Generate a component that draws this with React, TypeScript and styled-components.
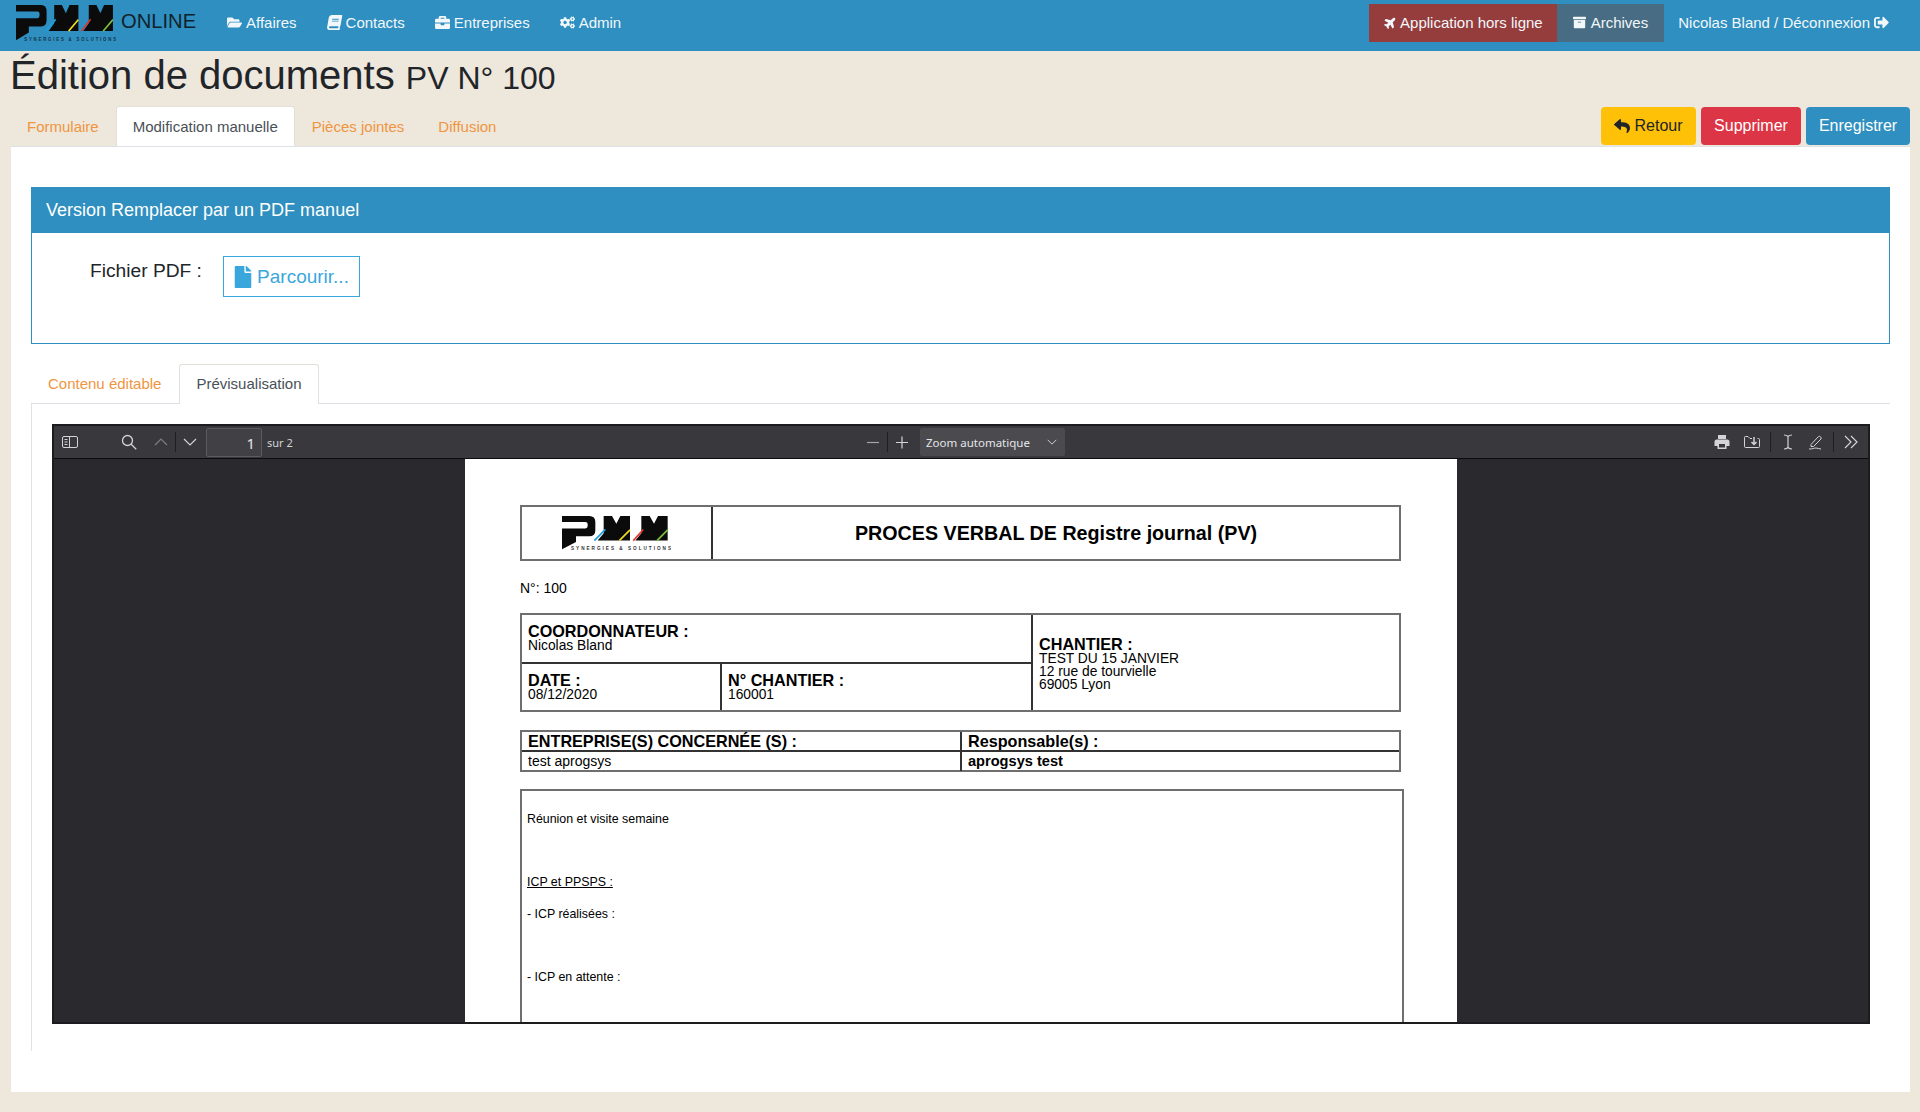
import React from 'react';
import styled, { createGlobalStyle } from 'styled-components';
import {
  FaArchive, FaBook, FaBriefcase, FaCogs, FaFile, FaFolderOpen, FaPlane, FaReply, FaSignOutAlt,
} from 'react-icons/fa';

const BLUE = '#2e8fc0';
const ORANGE = '#f0953f';

const GlobalStyle = createGlobalStyle`
  html, body {
    margin: 0;
    padding: 0;
    background: #eee7dc;
    color: #212529;
    font-family: "Liberation Sans", Arial, sans-serif;
    font-size: 16px;
  }
  * { box-sizing: border-box; }
`;

const Page = styled.div`
  min-height: 1112px;
  padding-bottom: 20px;
`;

const Navbar = styled.nav`
  height: 51px;
  background: ${BLUE};
  display: flex;
  align-items: center;
  padding: 0 0 6px 16px;
  color: #fff;
`;

const Brand = styled.div`
  display: flex;
  align-items: center;
  color: #10222c;
  font-size: 20.200px;
  width: 211px;
  gap: 5px;
`;

const BrandName = styled.span`
  padding-bottom: 2px;
`;

const NavLink = styled.span`
  display: inline-flex;
  align-items: center;
  gap: 4px;
  font-size: 15px;
  margin-right: 30px;
  white-space: nowrap;
  color: #f2f7fa;
  svg { font-size: 15px; }
`;

const NavRight = styled.div`
  margin-left: auto;
  display: flex;
  align-items: center;
  height: 38px;
`;

const NavBlock = styled.span<{ $bg: string; $gap: number; $pad: string }>`
  display: inline-flex;
  align-items: center;
  gap: ${({ $gap }) => $gap}px;
  height: 38px;
  padding: ${({ $pad }) => $pad};
  font-size: 15px;
  background: ${({ $bg }) => $bg};
  color: #f2f7fa;
  svg { font-size: 13px; }
`;

const PlaneIcon = styled(FaPlane)`
  transform: rotate(-45deg);
`;

const BookIcon = styled(FaBook)`
  transform: skewX(-10deg);
`;

const NavUser = styled.span`
  display: inline-flex;
  align-items: center;
  gap: 4px;
  font-size: 15px;
  color: #f2f7fa;
  margin: 0 31px 0 14px;
`;

const Title = styled.h1`
  margin: 0;
  padding: 0 0 0 10px;
  height: 55px;
  font-size: 40px;
  line-height: 48px;
  font-weight: 400;
  small { font-size: 32px; }
`;

const TabBar = styled.div`
  display: flex;
  align-items: flex-start;
  padding: 0 10px;
  height: 40px;
`;

const Tab = styled.span<{ $active?: boolean }>`
  height: 40px;
  padding: 0 16px 1px;
  display: flex;
  align-items: center;
  font-size: 15px;
  color: ${({ $active }) => ($active ? '#495057' : ORANGE)};
  background: ${({ $active }) => ($active ? '#fff' : 'transparent')};
  border-radius: 3px 3px 0 0;
  border: 1px solid ${({ $active }) => ($active ? '#e3e0da' : 'transparent')};
  border-bottom: none;
`;

const SubTab = styled(Tab)`
  padding-bottom: 3px;
`;

const Actions = styled.div`
  margin: 1px 0 0 auto;
  display: flex;
  gap: 5px;
`;

const ActionButton = styled.span<{ $bg: string; $fg: string; $w: number }>`
  height: 38px;
  width: ${({ $w }) => $w}px;
  display: inline-flex;
  align-items: center;
  justify-content: center;
  gap: 4px;
  border-radius: 4px;
  font-size: 16px;
  background: ${({ $bg }) => $bg};
  color: ${({ $fg }) => $fg};
`;

const Panel = styled.main`
  margin: 0 10px 0 11px;
  background: #fff;
  border-top: 1px solid #dee2e6;
  padding: 40px 20px 40px;
  height: 946px;
`;

const Card = styled.section`
  border: 1px solid ${BLUE};
  height: 157px;
`;

const CardHeader = styled.header`
  height: 45px;
  background: ${BLUE};
  color: #fff;
  font-size: 18px;
  padding: 0 14px;
  display: flex;
  align-items: center;
`;

const CardBody = styled.div`
  display: flex;
  align-items: flex-start;
  padding: 24px 0 0 58px;
`;

const FieldLabel = styled.label`
  font-size: 19.200px;
  line-height: 28px;
  width: 133px;
`;

const BrowseButton = styled.span`
  height: 41px;
  width: 137px;
  margin-top: -1px;
  padding-right: 2px;
  border: 1px solid #3aa7dc;
  color: #3aa7dc;
  font-size: 19px;
  display: inline-flex;
  align-items: center;
  justify-content: center;
  gap: 3px;
  svg { font-size: 22px; }
`;

const SubTabBar = styled.div`
  margin-top: 20px;
  display: flex;
  gap: 1px;
  height: 40px;
  border-bottom: 1px solid #dee2e6;
`;

const SubTabPane = styled.div`
  border-left: 1px solid #dee2e6;
  padding: 20px 20px 0 20px;
  height: 647px;
`;

const Viewer = styled.div`
  height: 600px;
  border: 2px solid #1c1c1f;
  background: #2a2a2e;
  display: flex;
  flex-direction: column;
  overflow: hidden;
`;

const ViewerToolbar = styled.div`
  height: 33px;
  flex: none;
  background: #38383d;
  border-bottom: 1px solid #0c0c0d;
  display: flex;
  align-items: center;
  position: relative;
  padding: 0 3px 0 2px;
  color: #d4d4d7;
`;

const ToolGroup = styled.div`
  display: flex;
  align-items: center;
`;

const ToolIcon = styled.span<{ $w?: number; $ml?: number }>`
  width: ${({ $w }) => $w ?? 28}px;
  margin-left: ${({ $ml }) => $ml ?? 0}px;
  height: 24px;
  display: inline-flex;
  align-items: center;
  justify-content: center;
  svg { display: block; }
`;

const ToolSep = styled.span<{ $mx?: number }>`
  width: 1px;
  height: 20px;
  margin: 0 ${({ $mx }) => $mx ?? 0}px;
  background: #1f1f22;
`;

const PageInput = styled.span`
  width: 56px;
  height: 29px;
  margin-left: 2px;
  background: #404045;
  border: 1px solid #5b5b60;
  border-radius: 2px;
  text-align: right;
  padding-right: 6px;
  line-height: 29px;
  font-size: 15px;
  font-family: "Noto Sans", sans-serif;
  color: #e6e6e8;
`;

const PageCount = styled.span`
  margin-left: 5px;
  font-size: 11px;
  font-family: "Noto Sans", sans-serif;
`;

const CenterTools = styled.div`
  position: absolute;
  left: 805px;
  top: 2px;
  height: 28px;
  display: flex;
  align-items: center;
`;

const ZoomSelect = styled.span`
  margin-left: 4px;
  width: 145px;
  height: 28px;
  background: #4a4a4f;
  border-radius: 2px;
  display: flex;
  align-items: center;
  justify-content: space-between;
  padding: 0 8px 0 6px;
  font-size: 11.500px;
  font-family: "Noto Sans", sans-serif;
  color: #e6e6e8;
`;

const RightTools = styled(ToolGroup)`
  margin-left: auto;
`;

const ViewerStage = styled.div`
  flex: 1;
  display: flex;
  justify-content: center;
  overflow: hidden;
`;

const PdfPage = styled.article`
  width: 992px;
  background: #fff;
  color: #000;
  padding: 46px 54px 0 55px;
  flex: none;
`;

const HeadBox = styled.div`
  width: 881px;
  height: 56px;
  border: 2px solid #6f6f6f;
  display: flex;
`;

const HeadLogo = styled.div`
  width: 191px;
  border-right: 2px solid #333;
  display: flex;
  align-items: center;
  justify-content: center;
`;

const HeadTitle = styled.div`
  flex: 1;
  display: flex;
  align-items: center;
  justify-content: center;
  font-weight: 700;
  font-size: 19.700px;
`;

const DocNumber = styled.div`
  font-size: 14px;
  line-height: 16px;
  margin: 19px 0 17px;
`;

const InfoTable = styled.div`
  width: 881px;
  height: 99px;
  border: 2px solid #6f6f6f;
  display: grid;
  grid-template-columns: 200px 311px 1fr;
  grid-template-rows: 49px 1fr;
`;

const InfoCell = styled.div<{ $span?: string; $rows?: string; $right?: boolean; $bottom?: boolean; $pad?: string }>`
  grid-column: ${({ $span }) => $span ?? 'auto'};
  grid-row: ${({ $rows }) => $rows ?? 'auto'};
  border-right: ${({ $right }) => ($right ? '2px solid #333' : 'none')};
  border-bottom: ${({ $bottom }) => ($bottom ? '2px solid #333' : 'none')};
  padding: ${({ $pad }) => $pad ?? '8px 6px 0'};
  display: flex;
  flex-direction: column;
`;

const CellLabel = styled.strong`
  font-size: 16.200px;
  line-height: 16px;
`;

const CellText = styled.span`
  font-size: 13.800px;
  line-height: 13px;
`;

const PeopleTable = styled.div`
  width: 881px;
  height: 42px;
  margin-top: 18px;
  border: 2px solid #6f6f6f;
  display: grid;
  grid-template-columns: 440px 1fr;
  grid-template-rows: 20px 1fr;
`;

const PeopleCell = styled.div<{ $right?: boolean; $bottom?: boolean; $bold?: boolean; $head?: boolean }>`
  border-right: ${({ $right }) => ($right ? '2px solid #333' : 'none')};
  border-bottom: ${({ $bottom }) => ($bottom ? '2px solid #333' : 'none')};
  padding: 0 6px;
  font-weight: ${({ $bold }) => ($bold ? 700 : 400)};
  font-size: ${({ $head, $bold }) => ($head ? 16.2 : $bold ? 14.6 : 14)}px;
  line-height: ${({ $head }) => ($head ? 18 : 19)}px;
  white-space: nowrap;
`;

const MinutesBox = styled.div`
  width: 884px;
  height: 400px;
  margin-top: 17px;
  border: 2px solid #6f6f6f;
  padding: 13px 5px 0;
  font-size: 12.400px;
  line-height: 31.6px;
`;

const MinutesLine = styled.div<{ $underline?: boolean }>`
  min-height: 31.6px;
  text-decoration: ${({ $underline }) => ($underline ? 'underline' : 'none')};
`;

const PMM_P = 'M18 15H100Q118 15 118 33V57Q118 75 100 75H60V92L18 114V52H88Q95 52 95 45V39Q95 33 88 33H18Z';
const PMM_M = 'M143 15H168L181 38L193 15H222V88H125L143 66Z';

const PmmLogo = ({ width, height, text }: { width: number; height: number; text: string }) => (
  <svg width={width} height={height} viewBox="18 15 327 101" preserveAspectRatio="none" style={{ display: 'block' }}>
    <path fill="#0b0b0c" d={PMM_P} />
    <path fill="#0b0b0c" d={PMM_M} />
    <path fill="#0b0b0c" d={PMM_M} transform="translate(113 0)" />
    <path stroke="#1d9fe0" strokeWidth="5" d="M115 88L148 55" />
    <path stroke="#f4dd1f" strokeWidth="5" d="M190 88L222 56" />
    <path stroke="#e2352b" strokeWidth="5" d="M232 88L262 55" />
    <path stroke="#7cc242" strokeWidth="5" d="M303 88L335 56" />
    <text x="45" y="115" fontSize="14" fontWeight="700" textLength="300" lengthAdjust="spacing" fill={text} fontFamily="Liberation Sans, sans-serif">
      SYNERGIES &amp; SOLUTIONS
    </text>
  </svg>
);

const Sidebar = () => (
  <svg width="16" height="14" viewBox="0 0 16 14" fill="none" stroke="currentColor">
    <rect x=".5" y="1.5" width="15" height="11" rx="1.5" />
    <path d="M7.5 1.5v11M2.5 4.5h3M2.5 7h3M2.5 9.5h3" />
  </svg>
);

const Search = () => (
  <svg width="16" height="16" viewBox="0 0 16 16" fill="none" stroke="currentColor" strokeWidth="1.3">
    <circle cx="6.5" cy="6.5" r="5" />
    <path d="M10.2 10.2l5 5" />
  </svg>
);

const Chevron = ({ up, dim, size = 14 }: { up?: boolean; dim?: boolean; size?: number }) => (
  <svg width={size} height={size} viewBox="0 0 14 14" fill="none" stroke="currentColor" strokeWidth="1.2" opacity={dim ? 0.45 : 1}>
    <path d={up ? 'M1 10l6-6 6 6' : 'M1 4l6 6 6-6'} />
  </svg>
);

const Minus = () => (
  <svg width="14" height="14" viewBox="0 0 14 14" stroke="currentColor" strokeWidth="1.2" opacity={0.7}>
    <path d="M1 7.5h12" />
  </svg>
);

const Plus = () => (
  <svg width="14" height="14" viewBox="0 0 14 14" stroke="currentColor" strokeWidth="1.2">
    <path d="M1 7.5h12M7 1.5v12" />
  </svg>
);

const Printer = () => (
  <svg width="16" height="16" viewBox="0 0 16 16" fill="currentColor">
    <path d="M4 1h8v4H4zM2.5 5.5h11c1 0 2 1 2 2V12h-3v3h-9v-3H.5V7.5c0-1 1-2 2-2zM5 10v3.5h6V10z" fillRule="evenodd" />
  </svg>
);

const SaveFile = () => (
  <svg width="16" height="14" viewBox="0 0 16 14" fill="none" stroke="currentColor">
    <path d="M4 1.5H1.5a1 1 0 0 0-1 1v9a1 1 0 0 0 1 1h13a1 1 0 0 0 1-1v-7a1 1 0 0 0-1-1h-1M4 1.5l2 2h2" />
    <path d="M10 2v7M7.5 7l2.5 2.5L12.500 7" strokeWidth="1.5" />
  </svg>
);

const TextCursor = () => (
  <svg width="12" height="16" viewBox="0 0 12 16" fill="none" stroke="currentColor" strokeWidth="1.2">
    <path d="M2 1c2 0 3 .5 4 1.500C7 1.500 8 1 10 1M6 2.500v11M2 15c2 0 3-.5 4-1.500 1 1 2 1.500 4 1.500" />
  </svg>
);

const Pencil = () => (
  <svg width="16" height="16" viewBox="0 0 16 16" fill="none" stroke="currentColor">
    <path d="M3 10.500L10.500 2.500c1-1 3.500 1 2.500 2.500L5.500 12.500H3zM1 15c4 0 5-1 7-1s3 1 5 1" />
  </svg>
);

const DoubleChevron = () => (
  <svg width="14" height="14" viewBox="0 0 14 14" fill="none" stroke="currentColor" strokeWidth="1.2">
    <path d="M1 1l6 6-6 6M7 1l6 6-6 6" />
  </svg>
);

const App = () => (
  <Page>
    <GlobalStyle />
    <Navbar>
      <Brand>
        <PmmLogo width={100} height={36} text="#16324a" />
        <BrandName>ONLINE</BrandName>
      </Brand>
      <NavLink><FaFolderOpen /> Affaires</NavLink>
      <NavLink><BookIcon /> Contacts</NavLink>
      <NavLink><FaBriefcase /> Entreprises</NavLink>
      <NavLink><FaCogs /> Admin</NavLink>
      <NavRight>
        <NavBlock $bg="#953c3d" $gap={3} $pad="0 14px 0 15px"><PlaneIcon /> Application hors ligne</NavBlock>
        <NavBlock $bg="#476c83" $gap={5} $pad="0 16px"><FaArchive /> Archives</NavBlock>
        <NavUser>Nicolas Bland / Déconnexion <FaSignOutAlt /></NavUser>
      </NavRight>
    </Navbar>
    <Title>Édition de documents <small>PV N° 100</small></Title>
    <TabBar>
      <Tab>Formulaire</Tab>
      <Tab $active>Modification manuelle</Tab>
      <Tab>Pièces jointes</Tab>
      <Tab>Diffusion</Tab>
      <Actions>
        <ActionButton $bg="#ffc107" $fg="#212529" $w={95}><FaReply /> Retour</ActionButton>
        <ActionButton $bg="#dc3545" $fg="#fff" $w={100}>Supprimer</ActionButton>
        <ActionButton $bg={BLUE} $fg="#fff" $w={104}>Enregistrer</ActionButton>
      </Actions>
    </TabBar>
    <Panel>
      <Card>
        <CardHeader>Version Remplacer par un PDF manuel</CardHeader>
        <CardBody>
          <FieldLabel>Fichier PDF :</FieldLabel>
          <BrowseButton><FaFile /> Parcourir...</BrowseButton>
        </CardBody>
      </Card>
      <SubTabBar>
        <SubTab>Contenu éditable</SubTab>
        <SubTab $active>Prévisualisation</SubTab>
      </SubTabBar>
      <SubTabPane>
        <Viewer>
          <ViewerToolbar>
            <ToolGroup>
              <ToolIcon><Sidebar /></ToolIcon>
              <ToolIcon $ml={31}><Search /></ToolIcon>
              <ToolIcon $ml={4}><Chevron up dim /></ToolIcon>
              <ToolSep />
              <ToolIcon><Chevron /></ToolIcon>
              <PageInput>1</PageInput>
              <PageCount>sur 2</PageCount>
            </ToolGroup>
            <CenterTools>
              <ToolIcon><Minus /></ToolIcon>
              <ToolSep />
              <ToolIcon><Plus /></ToolIcon>
              <ZoomSelect>Zoom automatique <Chevron size={10} /></ZoomSelect>
            </CenterTools>
            <RightTools>
              <ToolIcon $w={30}><Printer /></ToolIcon>
              <ToolIcon $w={30}><SaveFile /></ToolIcon>
              <ToolSep $mx={3} />
              <ToolIcon><TextCursor /></ToolIcon>
              <ToolIcon><Pencil /></ToolIcon>
              <ToolSep $mx={3} />
              <ToolIcon><DoubleChevron /></ToolIcon>
            </RightTools>
          </ViewerToolbar>
          <ViewerStage>
            <PdfPage>
              <HeadBox>
                <HeadLogo><PmmLogo width={109} height={34} text="#333" /></HeadLogo>
                <HeadTitle>PROCES VERBAL DE Registre journal (PV)</HeadTitle>
              </HeadBox>
              <DocNumber>N°: 100</DocNumber>
              <InfoTable>
                <InfoCell $span="1 / 3" $right $bottom>
                  <CellLabel>COORDONNATEUR :</CellLabel>
                  <CellText>Nicolas Bland</CellText>
                </InfoCell>
                <InfoCell $span="3" $rows="1 / 3" $pad="21px 6px 0">
                  <CellLabel>CHANTIER :</CellLabel>
                  <CellText>TEST DU 15 JANVIER</CellText>
                  <CellText>12 rue de tourvielle</CellText>
                  <CellText>69005 Lyon</CellText>
                </InfoCell>
                <InfoCell $right>
                  <CellLabel>DATE :</CellLabel>
                  <CellText>08/12/2020</CellText>
                </InfoCell>
                <InfoCell $right>
                  <CellLabel>N° CHANTIER :</CellLabel>
                  <CellText>160001</CellText>
                </InfoCell>
              </InfoTable>
              <PeopleTable>
                <PeopleCell $right $bottom $bold $head>ENTREPRISE(S) CONCERNÉE (S) :</PeopleCell>
                <PeopleCell $bottom $bold $head>Responsable(s) :</PeopleCell>
                <PeopleCell $right>test aprogsys</PeopleCell>
                <PeopleCell $bold>aprogsys test</PeopleCell>
              </PeopleTable>
              <MinutesBox>
                <MinutesLine>Réunion et visite semaine</MinutesLine>
                <MinutesLine />
                <MinutesLine $underline>ICP et PPSPS :</MinutesLine>
                <MinutesLine>- ICP réalisées :</MinutesLine>
                <MinutesLine />
                <MinutesLine>- ICP en attente :</MinutesLine>
              </MinutesBox>
            </PdfPage>
          </ViewerStage>
        </Viewer>
      </SubTabPane>
    </Panel>
  </Page>
);

export default App;
